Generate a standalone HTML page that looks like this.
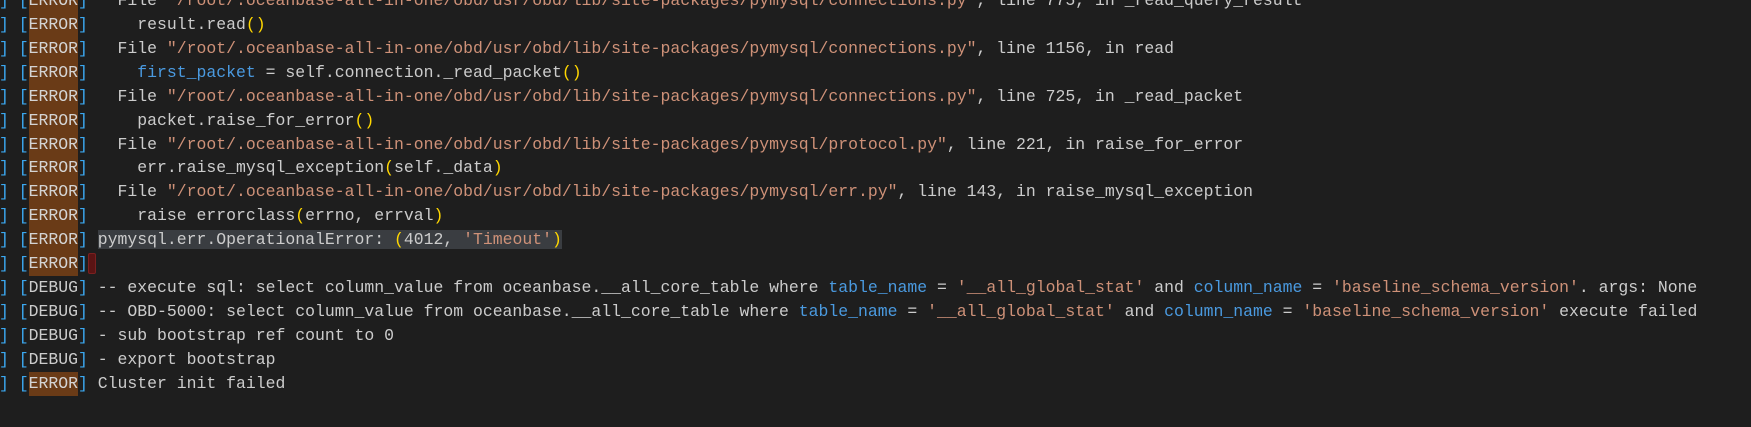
<!DOCTYPE html>
<html><head><meta charset="utf-8"><style>
html,body{margin:0;padding:0;background:#1e1e1e;width:1751px;height:427px;overflow:hidden}
.c{position:absolute;left:-1px;top:-11px;font-family:"Liberation Mono",monospace;font-size:16.47px;color:#cccccc}
.l{height:23.93px;line-height:23.93px;white-space:pre}
.b{color:#3ba8f0}
.e{background:#6a3b17;color:#d4d4d4;display:inline-block;height:23.93px;vertical-align:top}
.s{color:#ce9178}
.v{color:#4a9ae0}
.p{color:#ffd700}
.h{background:#3a3d41}
.cur{display:inline-block;width:8px;height:21px;vertical-align:middle;background:#5a1414;border:1px solid #7a2020;box-sizing:border-box;border-radius:2px}
</style></head><body>
<div class="c"><div class="l"><span class="b">]</span> <span class="b">[</span><span class="e">ERROR</span><span class="b">]</span>   File <span class="s">"/root/.oceanbase-all-in-one/obd/usr/obd/lib/site-packages/pymysql/connections.py"</span>, line 775, in _read_query_result</div><div class="l"><span class="b">]</span> <span class="b">[</span><span class="e">ERROR</span><span class="b">]</span>     result.read<span class="p">()</span></div><div class="l"><span class="b">]</span> <span class="b">[</span><span class="e">ERROR</span><span class="b">]</span>   File <span class="s">"/root/.oceanbase-all-in-one/obd/usr/obd/lib/site-packages/pymysql/connections.py"</span>, line 1156, in read</div><div class="l"><span class="b">]</span> <span class="b">[</span><span class="e">ERROR</span><span class="b">]</span>     <span class="v">first_packet</span> = self.connection._read_packet<span class="p">()</span></div><div class="l"><span class="b">]</span> <span class="b">[</span><span class="e">ERROR</span><span class="b">]</span>   File <span class="s">"/root/.oceanbase-all-in-one/obd/usr/obd/lib/site-packages/pymysql/connections.py"</span>, line 725, in _read_packet</div><div class="l"><span class="b">]</span> <span class="b">[</span><span class="e">ERROR</span><span class="b">]</span>     packet.raise_for_error<span class="p">()</span></div><div class="l"><span class="b">]</span> <span class="b">[</span><span class="e">ERROR</span><span class="b">]</span>   File <span class="s">"/root/.oceanbase-all-in-one/obd/usr/obd/lib/site-packages/pymysql/protocol.py"</span>, line 221, in raise_for_error</div><div class="l"><span class="b">]</span> <span class="b">[</span><span class="e">ERROR</span><span class="b">]</span>     err.raise_mysql_exception<span class="p">(</span>self._data<span class="p">)</span></div><div class="l"><span class="b">]</span> <span class="b">[</span><span class="e">ERROR</span><span class="b">]</span>   File <span class="s">"/root/.oceanbase-all-in-one/obd/usr/obd/lib/site-packages/pymysql/err.py"</span>, line 143, in raise_mysql_exception</div><div class="l"><span class="b">]</span> <span class="b">[</span><span class="e">ERROR</span><span class="b">]</span>     raise errorclass<span class="p">(</span>errno, errval<span class="p">)</span></div><div class="l"><span class="b">]</span> <span class="b">[</span><span class="e">ERROR</span><span class="b">]</span> <span class="h">pymysql.err.OperationalError: <span class="p">(</span>4012, <span class="s">'Timeout'</span><span class="p">)</span></span></div><div class="l"><span class="b">]</span> <span class="b">[</span><span class="e">ERROR</span><span class="b">]</span><span class="cur"></span></div><div class="l"><span class="b">]</span> <span class="b">[</span>DEBUG<span class="b">]</span> -- execute sql: select column_value from oceanbase.__all_core_table where <span class="v">table_name</span> = <span class="s">'__all_global_stat'</span> and <span class="v">column_name</span> = <span class="s">'baseline_schema_version'</span>. args: None</div><div class="l"><span class="b">]</span> <span class="b">[</span>DEBUG<span class="b">]</span> -- OBD-5000: select column_value from oceanbase.__all_core_table where <span class="v">table_name</span> = <span class="s">'__all_global_stat'</span> and <span class="v">column_name</span> = <span class="s">'baseline_schema_version'</span> execute failed</div><div class="l"><span class="b">]</span> <span class="b">[</span>DEBUG<span class="b">]</span> - sub bootstrap ref count to 0</div><div class="l"><span class="b">]</span> <span class="b">[</span>DEBUG<span class="b">]</span> - export bootstrap</div><div class="l"><span class="b">]</span> <span class="b">[</span><span class="e">ERROR</span><span class="b">]</span> Cluster init failed</div></div>
</body></html>
